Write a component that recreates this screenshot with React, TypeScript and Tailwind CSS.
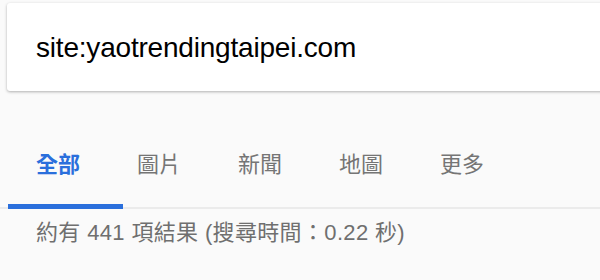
import React from 'react';

const tabs = ['全部', '圖片', '新聞', '地圖', '更多'];

export default function App() {
    return (
        <div
            className="w-[600px] h-[280px] overflow-hidden bg-[#fafafa]"
            style={{ fontFamily: '"Liberation Sans", "Noto Sans CJK TC", sans-serif' }}
        >
            <div className="pt-[3px] pl-[7px]">
                <div className="w-[620px] h-[88px] bg-white rounded-[3px] shadow-[0_1px_3px_rgba(0,0,0,0.3)] flex items-center pl-[29px]">
                    <span className="text-[28px] text-black tracking-[-0.2px] leading-none mt-[2px]">
                        site:yaotrendingtaipei.com
                    </span>
                </div>
            </div>

            <div className="mt-[19px] h-[99px] border-b-2 border-[#ebebeb] flex items-end pl-[8px]">
                {tabs.map((tab, i) => (
                    <div
                        key={tab}
                        className={
                            i === 0
                                ? 'w-[115px] h-full flex flex-col justify-end'
                                : 'w-[101px] h-full flex flex-col justify-end'
                        }
                    >
                        <div
                            className={
                                i === 0
                                    ? 'pl-[28px] pb-[31px] text-[22px] leading-none font-bold text-[#2a6fdc]'
                                    : 'pl-[14px] pb-[31px] text-[22px] leading-none text-[#757575]'
                            }
                            style={{ fontFamily: '"Noto Sans CJK TC", sans-serif' }}
                        >
                            {tab}
                        </div>
                        <div className={i === 0 ? 'h-[5px] bg-[#2a6fdc] -mb-[2px]' : 'h-[5px] -mb-[2px]'} />
                    </div>
                ))}
            </div>

            <div className="pl-[36px] pt-[13px] text-[22px] tracking-[0.35px] leading-none text-[#6f6f6f]">
                約有 441 項結果 (搜尋時間：0.22 秒)
            </div>
        </div>
    );
}
